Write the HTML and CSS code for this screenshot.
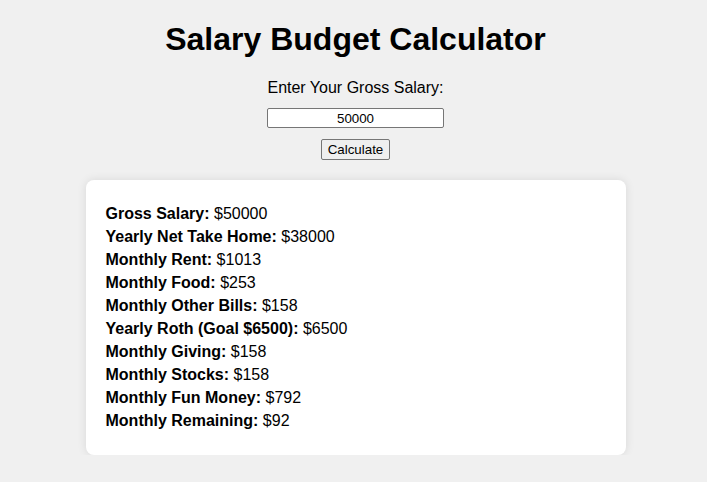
FILE: index.html
```html
<!DOCTYPE html>
<html>
<head>
<meta charset="utf-8">
<title>Salary Budget Calculator</title>
<link rel="stylesheet" href="styles.css">
</head>
<body>
  <h1 class="title">Salary Budget Calculator</h1>
  <div class="form">
    <label class="label" for="salary">Enter Your Gross Salary:</label>
    <input class="salary-input" id="salary" type="text" value="50000">
    <button class="calc-btn" type="button">Calculate</button>
  </div>
  <div class="results">
    <p class="row"><strong>Gross Salary:</strong> $50000</p>
    <p class="row"><strong>Yearly Net Take Home:</strong> $38000</p>
    <p class="row"><strong>Monthly Rent:</strong> $1013</p>
    <p class="row"><strong>Monthly Food:</strong> $253</p>
    <p class="row"><strong>Monthly Other Bills:</strong> $158</p>
    <p class="row"><strong>Yearly Roth (Goal $6500):</strong> $6500</p>
    <p class="row"><strong>Monthly Giving:</strong> $158</p>
    <p class="row"><strong>Monthly Stocks:</strong> $158</p>
    <p class="row"><strong>Monthly Fun Money:</strong> $792</p>
    <p class="row"><strong>Monthly Remaining:</strong> $92</p>
  </div>
</body>
</html>
```
FILE: styles.css
```css
html, body {
  margin: 0;
  background: #f0f0f0;
}
body {
  font-family: "Liberation Sans", Arial, sans-serif;
  color: #000;
  padding: 0 0 0 4px;
}
.title {
  font-size: 32px;
  font-weight: bold;
  text-align: center;
  margin: 21px 0 21px;
}
.form {
  display: flex;
  flex-direction: column;
  align-items: center;
}
.label {
  font-size: 16px;
  line-height: 18px;
  margin-bottom: 11px;
}
.salary-input {
  box-sizing: border-box;
  width: 177px;
  height: 20px;
  font-family: "Liberation Sans", Arial, sans-serif;
  font-size: 13.33px;
  text-align: center;
  border: 1px solid #767676;
  border-radius: 2px;
  background: #fff;
  padding: 1px 2px;
}
.calc-btn {
  margin-top: 11px;
  box-sizing: border-box;
  height: 21px;
  font-family: "Liberation Sans", Arial, sans-serif;
  font-size: 13.33px;
  padding: 1px 6px;
  border: 1px solid #767676;
  border-radius: 2px;
  background: #efefef;
  color: #000;
}
.results {
  max-width: 500px;
  margin: 20px auto 0;
  padding: 20px;
  background: #fff;
  border-radius: 8px;
  box-shadow: 0 0 10px rgba(0, 0, 0, 0.1);
}
.row {
  font-size: 16px;
  line-height: 18px;
  margin: 5px 0;
}
```
